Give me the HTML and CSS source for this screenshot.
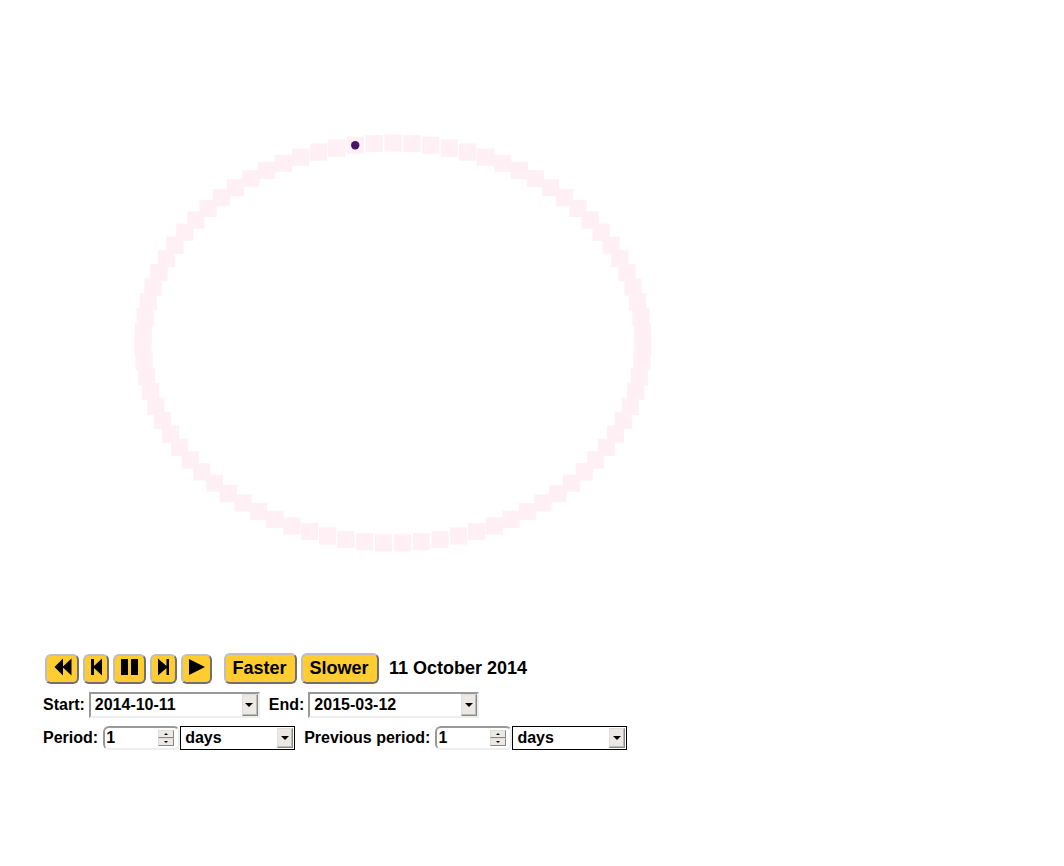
FILE: index.html
```html
<!DOCTYPE html>
<html lang="en">
<head>
<meta charset="utf-8">
<title>Timeline</title>
<link rel="stylesheet" href="styles.css">
</head>
<body>
<svg class="chart" viewBox="0 0 1064 650" role="img" aria-label="Ring of periods"><g id="ring" class="ring"></g><circle class="dot" cx="355.2" cy="145.2" r="4.2"/></svg>
<form class="controls">
  <div class="playback">
    <button type="button" class="btn back" aria-label="Rewind"><svg width="18" height="18" viewBox="0 0 18 18"><path d="M.5 9 9 .5V8.500L17.500 .5V17.500L9 9.500V17.500Z"/></svg></button>
    <button type="button" class="btn step" aria-label="Step back"><svg width="12" height="18" viewBox="0 0 12 18"><path d="M1 1H4V8L12 .5V17.500L4 10V17H1Z"/></svg></button>
    <button type="button" class="btn pause" aria-label="Pause"><svg width="17" height="18" viewBox="0 0 17 18"><path d="M0 1H7V17H0ZM10 1H17V17H10Z"/></svg></button>
    <button type="button" class="btn step fwd" aria-label="Step forward"><svg width="12" height="18" viewBox="0 0 12 18"><path d="M11 1H8.500V8L0 .5V17.500L8.500 10V17H11Z"/></svg></button>
    <button type="button" class="btn play" aria-label="Play"><svg width="16" height="18" viewBox="0 0 16 18"><path d="M0 1 16 9 0 17Z"/></svg></button>
    <button type="button" class="btn word faster">Faster</button>
    <button type="button" class="btn word slower">Slower</button>
    <output class="today">11 October 2014</output>
  </div>
  <div class="row dates">
    <label for="start">Start:</label>
    <span class="field date"><input id="start" type="text" value="2014-10-11"><button type="button" class="drop" aria-label="Choose start date"><svg width="8" height="4"><path d="M0 0H8L4 4Z"/></svg></button></span>
    <label class="second" for="end">End:</label>
    <span class="field date"><input id="end" type="text" value="2015-03-12"><button type="button" class="drop" aria-label="Choose end date"><svg width="8" height="4"><path d="M0 0H8L4 4Z"/></svg></button></span>
  </div>
  <div class="row">
    <label for="period">Period:</label>
    <span class="field number"><input id="period" type="number" value="1"><span class="spin"><button type="button" aria-label="Increase period"><svg width="4" height="2"><path d="M0 2 2 0 4 2Z"/></svg></button><button type="button" aria-label="Decrease period"><svg width="4" height="2"><path d="M0 0H4L2 2Z"/></svg></button></span></span>
    <span class="field unit"><select aria-label="Period unit"><option>days</option></select><span class="drop"><svg width="8" height="4"><path d="M0 0H8L4 4Z"/></svg></span></span>
    <label class="second" for="previous">Previous period:</label>
    <span class="field number"><input id="previous" type="number" value="1"><span class="spin"><button type="button" aria-label="Increase previous period"><svg width="4" height="2"><path d="M0 2 2 0 4 2Z"/></svg></button><button type="button" aria-label="Decrease previous period"><svg width="4" height="2"><path d="M0 0H4L2 2Z"/></svg></button></span></span>
    <span class="field unit"><select aria-label="Previous period unit"><option>days</option></select><span class="drop"><svg width="8" height="4"><path d="M0 0H8L4 4Z"/></svg></span></span>
  </div>
</form>
<script src="ring.js"></script>
</body>
</html>
```
FILE: styles.css
```css
* { box-sizing: border-box; }
body {
  margin: 0;
  background: #fff;
  color: #000;
  font: bold 16px/20px "Liberation Sans", Arial, sans-serif;
}
svg { display: block; }
.chart { width: 100%; height: auto; }
.ring { fill: #fff0f5; }
.dot { fill: #46166b; }
.controls { padding: 3px 43px 0; }
.playback {
  display: flex;
  align-items: flex-end;
  gap: 4px;
  padding-left: 2px;
}
.btn {
  display: flex;
  justify-content: center;
  height: 30px;
  padding: 2px 0 0;
  border: 2px solid;
  border-color: #bfbfbf #707070 #707070 #bfbfbf;
  border-radius: 6px;
  background: #ffcd2f;
  color: #000;
  font: bold 18px/22px "Liberation Sans", Arial, sans-serif;
}
.back { width: 34px; padding-left: 1px; }
.step { width: 26px; }
.fwd { width: 27px; }
.pause { width: 33px; }
.play { width: 31px; }
.word { height: 31px; padding-right: 2px; }
.faster { width: 73px; margin-left: 8px; }
.slower { width: 78px; }
.today {
  padding: 0 0 5px 6px;
  font-size: 18px;
  line-height: 22px;
}
.row {
  display: flex;
  align-items: center;
  margin-top: 8px;
}
.row label { margin-right: 5px; }
.row .second { margin-left: 9px; }
.dates label { margin-right: 4px; }
.field {
  display: flex;
  align-items: center;
  height: 24px;
  background: #fff;
}
.field input, .field select {
  flex: 1;
  min-width: 0;
  height: 20px;
  padding: 0;
  border: 0;
  outline: 0;
  appearance: none;
  background: transparent;
  color: #000;
  font: inherit;
}
.field input[type="number"] { appearance: textfield; }
.field input::-webkit-inner-spin-button { appearance: none; margin: 0; }
.date {
  width: 171px;
  height: 26px;
  padding-left: 4px;
  border: 2px solid;
  border-color: #999 #eee #eee #999;
}
.number {
  width: 77px;
  padding: 0 4px 0 1px;
  border: 2px solid;
  border-color: #999 #eee #eee #999;
  border-radius: 6px;
}
.unit {
  position: relative;
  width: 115px;
  border: 1px solid #000;
}
.field select { width: 100%; height: 22px; padding-left: 4px; }
.drop {
  display: flex;
  align-items: center;
  justify-content: center;
  width: 16px;
  height: 22px;
  padding: 0 1px 0 0;
  border: 1px solid;
  border-color: #ddd #888 #888 #ddd;
  background: #ece9e4;
  box-shadow: inset -1px -1px #bbb;
}
.unit .drop {
  position: absolute;
  top: 1px;
  right: 1px;
  height: 20px;
  pointer-events: none;
}
.spin { display: flex; flex-direction: column; width: 16px; }
.spin button {
  display: flex;
  align-items: center;
  justify-content: center;
  height: 8px;
  padding: 0;
  border: 1px solid;
  border-color: #ddd #888 #888 #ddd;
  background: #ece9e4;
}
```
FILE: ring.js
```
const ring = document.getElementById("ring");
const count = 83;
const size = 17.2;
for (let i = 0; i < count; i++) {
  const angle = (2 * Math.PI * i) / count;
  const rect = document.createElementNS("http://www.w3.org/2000/svg", "rect");
  rect.setAttribute("x", 393 + 250 * Math.sin(angle) - size / 2);
  rect.setAttribute("y", 343 - 200 * Math.cos(angle) - size / 2);
  rect.setAttribute("width", size);
  rect.setAttribute("height", size);
  ring.appendChild(rect);
}
```
